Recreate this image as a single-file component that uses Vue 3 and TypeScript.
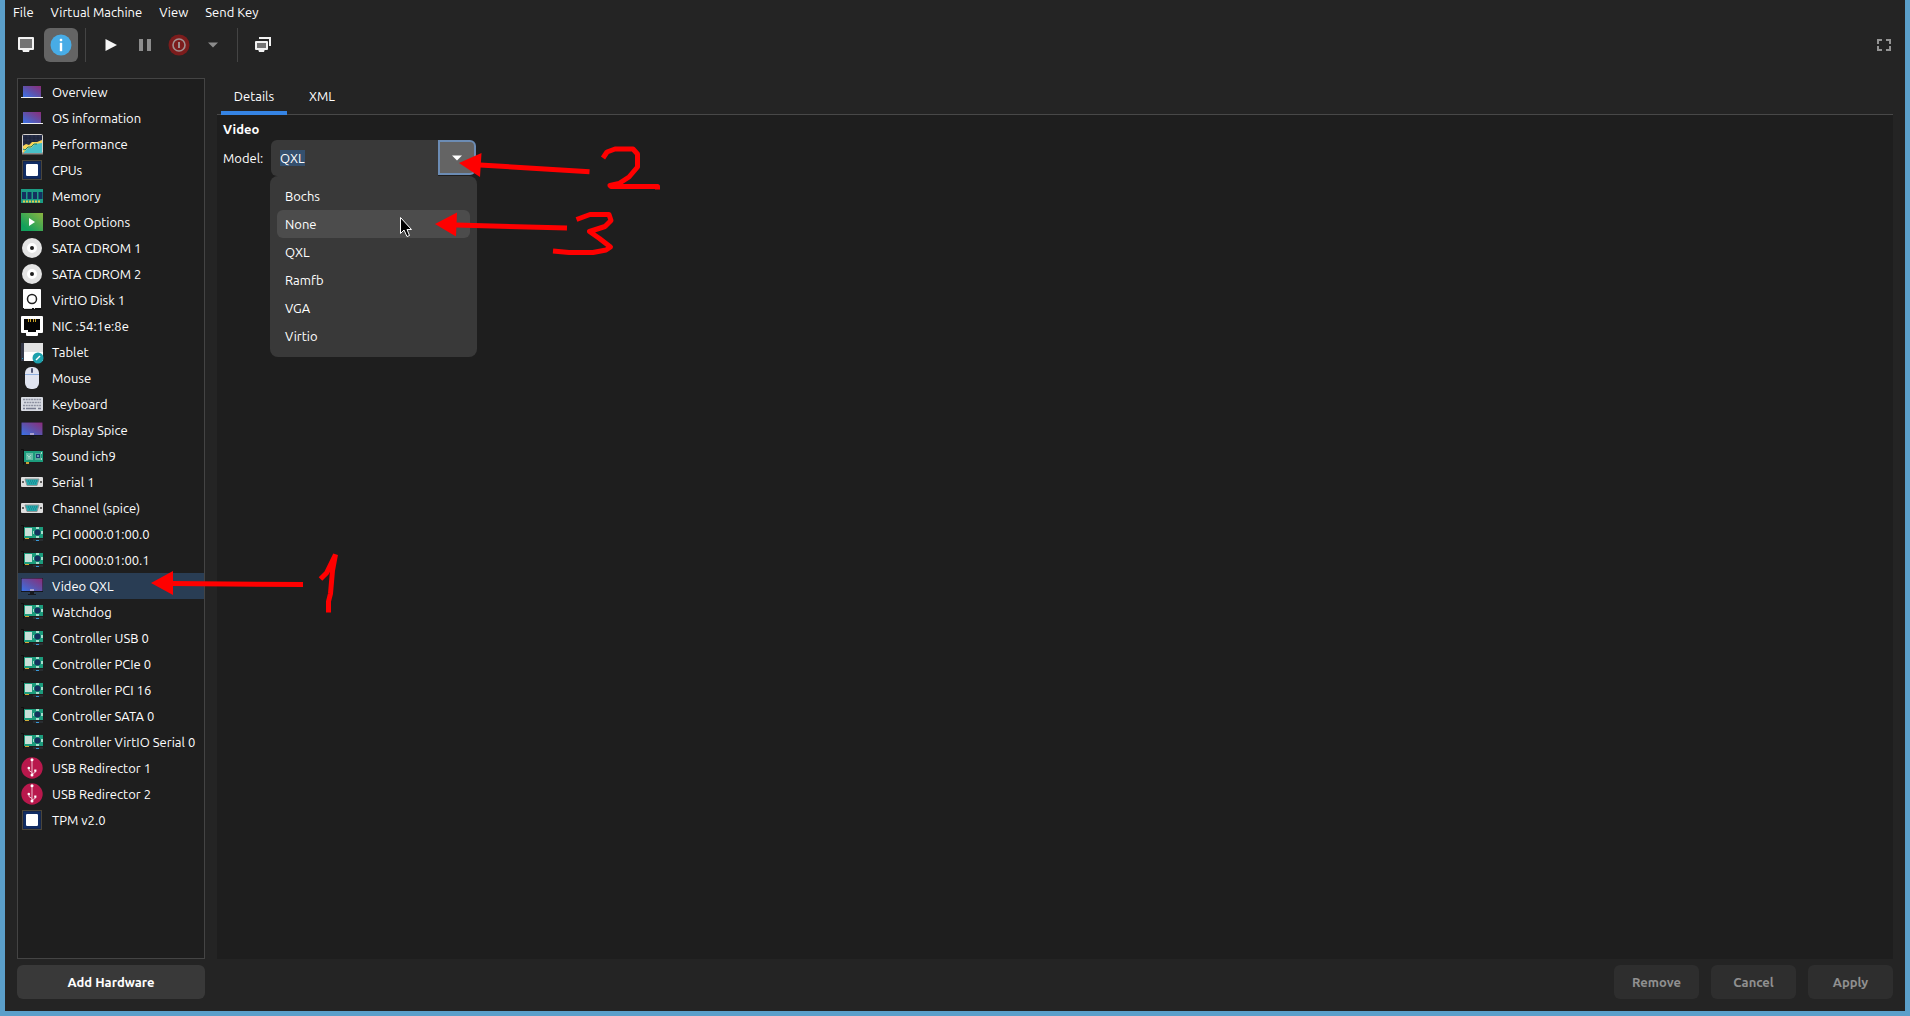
<script setup lang="ts">
import { onMounted, ref } from 'vue'

interface Device {
  name: string
  icon: string
}

const menus = ['File', 'Virtual Machine', 'View', 'Send Key']

const devices: Device[] = [
  { name: 'Overview', icon: 'laptop' },
  { name: 'OS information', icon: 'laptop' },
  { name: 'Performance', icon: 'chart' },
  { name: 'CPUs', icon: 'chip' },
  { name: 'Memory', icon: 'memory' },
  { name: 'Boot Options', icon: 'boot' },
  { name: 'SATA CDROM 1', icon: 'disc' },
  { name: 'SATA CDROM 2', icon: 'disc' },
  { name: 'VirtIO Disk 1', icon: 'disk' },
  { name: 'NIC :54:1e:8e', icon: 'nic' },
  { name: 'Tablet', icon: 'tablet' },
  { name: 'Mouse', icon: 'mouse' },
  { name: 'Keyboard', icon: 'keyboard' },
  { name: 'Display Spice', icon: 'display' },
  { name: 'Sound ich9', icon: 'sound' },
  { name: 'Serial 1', icon: 'serial' },
  { name: 'Channel (spice)', icon: 'serial' },
  { name: 'PCI 0000:01:00.0', icon: 'card' },
  { name: 'PCI 0000:01:00.1', icon: 'card' },
  { name: 'Video QXL', icon: 'display' },
  { name: 'Watchdog', icon: 'card' },
  { name: 'Controller USB 0', icon: 'card' },
  { name: 'Controller PCIe 0', icon: 'card' },
  { name: 'Controller PCI 16', icon: 'card' },
  { name: 'Controller SATA 0', icon: 'card' },
  { name: 'Controller VirtIO Serial 0', icon: 'card' },
  { name: 'USB Redirector 1', icon: 'usb' },
  { name: 'USB Redirector 2', icon: 'usb' },
  { name: 'TPM v2.0', icon: 'chip' },
]

const models = ['Bochs', 'None', 'QXL', 'Ramfb', 'VGA', 'Virtio']

const selected = ref('Video QXL')
const hovered = ref('None')
const model = ref('QXL')
const menuOpen = ref(true)
const tab = ref('Details')
const entry = ref<HTMLInputElement | null>(null)

function choose(name: string) {
  model.value = name
  menuOpen.value = false
}

onMounted(() => {
  entry.value?.focus()
  entry.value?.select()
})
</script>

<template>
  <div class="window">
    <svg class="defs" width="0" height="0" aria-hidden="true">
      <defs>
        <linearGradient id="screen" x1="0" y1="1" x2="1" y2="0">
          <stop offset="0" stop-color="#3a72e8" />
          <stop offset="0.5" stop-color="#6050a8" />
          <stop offset="1" stop-color="#8c2c78" />
        </linearGradient>
        <linearGradient id="green" x1="0" y1="1" x2="1" y2="0">
          <stop offset="0.2" stop-color="#12a05c" />
          <stop offset="1" stop-color="#8cb440" />
        </linearGradient>
      </defs>
    </svg>

    <nav class="menubar">
      <button v-for="m in menus" :key="m" type="button">{{ m }}</button>
    </nav>

    <div class="toolbar">
      <button type="button" class="tool" aria-label="Console">
        <svg width="16" height="16" viewBox="0 0 16 16"><path d="M1 1h14v11H1z" fill="#747474" stroke="#f2f2f2" stroke-width="2" stroke-linejoin="round" /><path d="M4 12h8l-1 3H5z" fill="#f2f2f2" /></svg>
      </button>
      <button type="button" class="tool active" aria-label="Details">
        <svg width="22" height="22" viewBox="0 0 22 22"><circle cx="11" cy="11" r="10.5" fill="#48ace6" /><path d="M10 5h2v2h-2zM10 9h2v8h-2z" fill="#fff" stroke="#fff" stroke-width=".4" /></svg>
      </button>
      <span class="rule"></span>
      <button type="button" class="tool" aria-label="Run">
        <svg width="12" height="14" viewBox="0 0 12 14"><path d="M.5 1v12L12 7z" fill="#f6f6f6" /></svg>
      </button>
      <button type="button" class="tool" aria-label="Pause">
        <svg width="12" height="12" viewBox="0 0 12 12"><path d="M0 0h4v12H0zM8 0h4v12H8z" fill="#8c8c8c" /></svg>
      </button>
      <button type="button" class="tool" aria-label="Shut down">
        <svg width="22" height="22" viewBox="0 0 22 22"><circle cx="11" cy="11" r="10.5" fill="#7c1c1c" /><circle cx="11" cy="11" r="6" fill="none" stroke="#a09090" stroke-width="1.6" /><path d="M10 8h2v6h-2z" fill="#a09090" /></svg>
      </button>
      <button type="button" class="tool" aria-label="Shut down options">
        <svg width="10" height="6" viewBox="0 0 10 6"><path d="M0 .5h10L5 5.5z" fill="#8c8c8c" /></svg>
      </button>
      <span class="rule"></span>
      <button type="button" class="tool" aria-label="Snapshots">
        <svg width="16" height="16" viewBox="0 0 16 16"><path d="M4 1h11v8" fill="none" stroke="#f2f2f2" stroke-width="2" /><path d="M1 5h11v7H1z" fill="#747474" stroke="#f2f2f2" stroke-width="2" stroke-linejoin="round" /><path d="M3 12h7l-1 3H4z" fill="#f2f2f2" /></svg>
      </button>
      <button type="button" class="tool fullscreen" aria-label="Fullscreen">
        <svg width="14" height="12" viewBox="0 0 14 12"><path d="M5 1H1v4M9 1h4v4M5 11H1V7M9 11h4V7" fill="none" stroke="#949494" stroke-width="2" /></svg>
      </button>
    </div>

    <main class="body">
      <aside class="sidebar">
        <ul class="devices">
          <li v-for="d in devices" :key="d.name">
            <button type="button" class="device" :class="{ current: d.name === selected }" @click="selected = d.name">
              <svg class="icon" width="24" height="24" viewBox="0 0 24 24" aria-hidden="true">
                <g v-if="d.icon === 'laptop'">
                  <path d="M3 6h18v11H3z" fill="url(#screen)" /><path d="M1 17h22v1H1z" fill="#eee" />
                </g>
                <g v-else-if="d.icon === 'chart'">
                  <rect x="2.5" y="2.5" width="20" height="19" rx="1" fill="#262e48" stroke="#d4d0cc" />
                  <path d="M6 3v18M10 3v18M14 3v18M18 3v18M3 6h19M3 10h19" stroke="#1c2238" stroke-width="1" />
                  <path d="M3 14l3-2 3 1 3-3h5l5-2v5l-10 4-9 4z" fill="#f8d458" />
                  <path d="M4 20l4-4h3l4-4 7-1v10H4z" fill="#48c0c8" /><path d="M3 17l2 1 3-3h3l3-3 3 0" fill="none" stroke="#148070" />
                  <path d="M2 21h21v1.500H2z" fill="#8c8884" />
                </g>
                <g v-else-if="d.icon === 'chip'">
                  <rect x="2" y="2" width="20" height="20" rx="1" fill="#14264c" />
                  <rect x="2.5" y="2.500" width="19" height="19" fill="none" stroke="#806428" stroke-dasharray="1 1" />
                  <rect x="4" y="4" width="16" height="16" fill="#102c64" /><path d="M6 6h12v12H6z" fill="#fff" />
                  <path d="M6 6h1v1H6zM17 6h1v1h-1zM6 17h1v1H6zM17 17h1v1h-1z" fill="#b0b8c8" />
                </g>
                <g v-else-if="d.icon === 'memory'">
                  <path d="M1 5h22v14H1z" fill="#1c9c84" /><path d="M2 8h4v7H2zM7.500 8h4v7h-4zM13 8h4v7h-4zM18.500 8h4v7h-4z" fill="#143060" />
                  <path d="M3 17.500h18" stroke="#e0cc4c" stroke-width="2" stroke-dasharray="2 1" />
                </g>
                <g v-else-if="d.icon === 'boot'">
                  <path d="M1 3h22v18H1z" fill="url(#green)" /><path d="M9 8v8l6-4z" fill="#fff" />
                </g>
                <g v-else-if="d.icon === 'disc'">
                  <circle cx="12" cy="12" r="10" fill="#e4e4e4" /><circle cx="12" cy="12" r="3.500" fill="#1e1e1e" stroke="#fff" stroke-width="3" />
                </g>
                <g v-else-if="d.icon === 'disk'">
                  <rect x="3" y="1" width="18" height="20" rx="1" fill="#fff" /><circle cx="12" cy="11" r="4.500" fill="none" stroke="#202020" stroke-width="1.500" />
                  <path d="M3 20h18v2H3z" fill="#111" /><path d="M4 20h8v1H4zM14 20h1v1h-1z" fill="#ddd" />
                </g>
                <g v-else-if="d.icon === 'nic'">
                  <path d="M1 3q0-1 1-1h20q1 0 1 1v15q0 1-1 1h-4v2q0 1-1 1H7q-1 0-1-1v-2H2q-1 0-1-1z" fill="#fff" />
                  <path d="M4 5h16v11h-4v2H8v-2H4z" fill="#050505" /><path d="M8.500 5v3M10.500 5v3M13.500 5v3M15.500 5v3" stroke="#c8a028" />
                </g>
                <g v-else-if="d.icon === 'tablet'">
                  <path d="M1 3h22v18H1z" fill="#fff" /><path d="M4 3h19v9H4z" fill="#e2e2e2" /><path d="M1 3h3v18H1z" fill="#343848" /><path d="M2 18h1v1H2z" fill="#20a0c8" />
                  <circle cx="18" cy="18" r="5.500" fill="#1ca0ac" /><path d="M16 20l4-4" stroke="#fff" stroke-width="1.500" />
                </g>
                <g v-else-if="d.icon === 'mouse'">
                  <rect x="5" y="1" width="14" height="22" rx="6" fill="#e0e4f0" /><path d="M5 8.500h14" stroke="#90b0e0" /><rect x="11" y="2" width="2" height="5" rx="1" fill="#505878" />
                </g>
                <g v-else-if="d.icon === 'keyboard'">
                  <rect x="1" y="5" width="22" height="14" rx="1" fill="#d8dbe2" />
                  <path d="M3 7.500h18M4 10.500h17M3 13.500h18" stroke="#8c90a0" stroke-width="1.600" stroke-dasharray="2 .7" /><path d="M3 16.500h2M6 16.500h10M18 16.500h3" stroke="#787d90" stroke-width="1.500" />
                </g>
                <g v-else-if="d.icon === 'display'">
                  <path d="M1 4h22v14H1z" fill="#14161c" /><path d="M1.500 4.500h21v12.500h-21z" fill="url(#screen)" /><path d="M10 15h4v2h-4z" fill="#a8a0d0" /><path d="M10 18h4v2h2v1H8v-1h2z" fill="#16181e" />
                </g>
                <g v-else-if="d.icon === 'serial'">
                  <rect x="1" y="7" width="22" height="10" rx="1" fill="#dedede" /><path d="M5 9h14l-2 6.500H7z" fill="#24a8ac" stroke="#8c9494" />
                  <path d="M8 11h9M9 13h7" stroke="#147880" stroke-dasharray="1 1" /><circle cx="3" cy="12" r="1" fill="#383838" /><circle cx="21" cy="12" r="1" fill="#383838" />
                </g>
                <g v-else-if="d.icon === 'sound'">
                  <path d="M1 5.500h2.500v15" fill="none" stroke="#0e0e0e" /><path d="M4 7h19v11H4z" fill="#1c9c7c" /><path d="M6 9h7v7H6z" fill="#64bca6" /><path d="M7 11l2 2 2-2M8 14h3" fill="none" stroke="#a8dccc" />
                  <path d="M15 9h6v7h-6z" fill="#50ac98" /><path d="M16 10h4v4h-4z" fill="#1c3c70" /><path d="M17 11h2v2h-2z" fill="#7090c0" /><path d="M21 8h1v2h-1zM21 14h1v2h-1z" fill="#a8dcc8" /><path d="M6 18h3v2H6z" fill="#c8a034" />
                </g>
                <g v-else-if="d.icon === 'card'">
                  <path d="M1 3.500h2.500v15" fill="none" stroke="#0e0e0e" /><path d="M4 5h19v11H4z" fill="#1c9c7c" /><path d="M5 6h7v8H5z" fill="#c8e0d8" />
                  <circle cx="17.500" cy="10.500" r="3" fill="#14305c" /><path d="M13 9h1v3h-1zM16 5h3v2h-3zM21 9h2v3h-2zM16 14h3v2h-3z" fill="#a4e0cc" /><path d="M5 16h4v1H5z" fill="#d0ac38" />
                  <path d="M13 18h10" stroke="#343c44" /><path d="M16 18h3v1h-3z" fill="#3898d8" />
                </g>
                <g v-else-if="d.icon === 'usb'">
                  <circle cx="12" cy="12" r="10.700" fill="#b8184c" />
                  <path d="M12 4v14M12 16.500l-3-2v-2.500M12 18l3.300-1.700v-2" fill="none" stroke="#f4d4de" stroke-width=".9" />
                  <circle cx="12" cy="3.800" r="1.500" fill="#fff" /><circle cx="12" cy="19" r="1.500" fill="#fff" /><circle cx="8.800" cy="12" r="1.300" fill="#fff" /><path d="M14.200 13.500h2.200v2.200h-2.200z" fill="#fff" />
                </g>
              </svg>
              <span>{{ d.name }}</span>
            </button>
          </li>
        </ul>
        <button type="button" class="action">Add Hardware</button>
      </aside>

      <section class="panel">
        <div class="tabs" role="tablist">
          <button v-for="t in ['Details', 'XML']" :key="t" type="button" role="tab" class="tab" :aria-selected="t === tab" @click="tab = t">{{ t }}</button>
        </div>
        <div class="page">
          <h2>Video</h2>
          <div class="field">
            <label for="model">Model:</label>
            <div class="combo">
              <input id="model" ref="entry" v-model="model" type="text" autocomplete="off" spellcheck="false" />
              <button type="button" class="toggle" aria-label="Show models" @click="menuOpen = !menuOpen">
                <svg width="10" height="6" viewBox="0 0 10 6"><path d="M0 .5h10L5 5.500z" fill="#fff" /></svg>
              </button>
              <div v-if="menuOpen" class="options" role="listbox" aria-label="Model">
                <button v-for="m in models" :key="m" type="button" role="option" :aria-selected="m === model" :class="{ hover: m === hovered }" @mouseenter="hovered = m" @click="choose(m)">{{ m }}</button>
              </div>
            </div>
          </div>
        </div>
        <div class="actions">
          <button type="button" class="action" disabled>Remove</button>
          <button type="button" class="action" disabled>Cancel</button>
          <button type="button" class="action" disabled>Apply</button>
        </div>
      </section>
    </main>

    <!-- Numbered steps drawn over the window -->
    <svg class="marks" width="680" height="630" viewBox="0 0 680 630" aria-hidden="true">
      <g fill="#f00" stroke="none">
        <path d="M151 583l22-12v24z" /><path d="M459 163l22.500-10-1.500 24z" /><path d="M435 224l22-11.500-1 24z" />
      </g>
      <g fill="none" stroke="#f00" stroke-width="5">
        <path d="M172 583.500l131 1" /><path d="M480 165l109.500 6.700" /><path d="M456 225l111 3" />
        <path d="M320.500 579l6-6 9-18.500-3 16-2 23-2 8v11" />
        <path d="M603 158l4-6 8-3h18l4.500 5v13l-8.500 10-10 6.500-9 2 1 1h46.500v3" stroke-linejoin="round" />
        <path d="M576.500 219.500l13.500-5h19l2 6-6 6-15.500 5 10 7 11 8.500-4.500 3-13 2.500h-24l-16-1.500" stroke-linejoin="round" />
      </g>
      <path d="M400.500 217.500v16l3.500-3.500 3 6.500 2.500-1-2.500-6h4.500z" fill="#000" stroke="#fff" />
    </svg>
  </div>
</template>

<style>
body {
  margin: 0;
  background: #242424;
}
</style>

<style scoped>
.window {
  position: relative;
  box-sizing: border-box;
  min-height: 100vh;
  display: flex;
  flex-direction: column;
  border: 5px solid #5b9fca;
  border-top: 0;
  background: #242424;
  color: #fff;
  font: 13px/16px Ubuntu, "Noto Sans", sans-serif;
}
button,
input {
  box-sizing: border-box;
  margin: 0;
  padding: 0;
  border: 0;
  background: none;
  color: inherit;
  font: inherit;
  outline: none;
}
.defs {
  position: absolute;
}
.menubar {
  display: flex;
  gap: 17px;
  height: 28px;
  padding: 4px 8px 8px;
  box-sizing: border-box;
}
.toolbar {
  display: flex;
  height: 34px;
  padding: 0 4px;
}
.tool {
  width: 34px;
  height: 34px;
  display: flex;
  align-items: center;
  justify-content: center;
}
.tool.active {
  margin-left: 1px;
  border-radius: 6px;
  background: #646464;
}
.rule {
  width: 1px;
  margin: 0 8px 0 7px;
  background: #444;
}
.fullscreen {
  margin-left: auto;
}
.body {
  flex: 1;
  display: flex;
  gap: 12px;
  padding: 16px 12px 12px;
}
.sidebar {
  flex: none;
  width: 188px;
  display: flex;
  flex-direction: column;
  gap: 6px;
}
.devices {
  flex: 1;
  margin: 0;
  padding: 0;
  list-style: none;
  border: 1px solid #444;
  background: #1e1e1e;
}
.device {
  display: flex;
  align-items: center;
  gap: 8px;
  width: 100%;
  height: 26px;
  padding: 0 2px;
  text-align: left;
  white-space: nowrap;
}
.device.current {
  background: #293d54;
}
.icon {
  flex: none;
}
.action {
  height: 34px;
  min-width: 85px;
  border-radius: 6px;
  background: #393939;
  font-weight: 700;
}
.action:disabled {
  background: #2e2e2e;
  color: #909090;
}
.panel {
  flex: 1;
  display: flex;
  flex-direction: column;
}
.tabs {
  display: flex;
  gap: 9px;
  height: 37px;
  padding: 0 4px;
  box-sizing: border-box;
  border-bottom: 1px solid #484848;
}
.tab {
  min-width: 52px;
  height: 37px;
  padding: 0 12px;
  border-top: 2px solid transparent;
  border-bottom: 4px solid transparent;
}
.tab[aria-selected='true'] {
  min-width: 66px;
  border-bottom-color: #3584e4;
}
.page {
  flex: 1;
  padding: 6px;
  background: #1e1e1e;
}
h2 {
  margin: 0;
  font-size: 13px;
  line-height: 16px;
  font-weight: 700;
}
.field {
  display: flex;
  align-items: center;
  gap: 6px;
  margin-top: 3px;
}
.field label {
  width: 42px;
}
.combo {
  position: relative;
  display: flex;
  width: 205px;
  height: 36px;
}
.combo input {
  flex: 1;
  min-width: 0;
  padding: 0 9px;
  border-radius: 6px 0 0 6px;
  background: #393939;
}
.combo input::selection {
  background: #35506e;
  color: #fff;
}
.toggle {
  width: 38px;
  height: 35px;
  border: 2px solid #6c8cb4;
  border-radius: 0 6px 6px 0;
  background: #646464;
}
.toggle svg {
  display: block;
  margin: auto;
}
.options {
  position: absolute;
  top: 36px;
  left: -1px;
  right: -1px;
  display: flex;
  flex-direction: column;
  padding: 6px 7px 7px;
  border-radius: 8px;
  background: #393939;
}
.options button {
  height: 28px;
  padding: 0 8px;
  border-radius: 6px;
  text-align: left;
}
.options button.hover {
  background: #4c4c4c;
}
.actions {
  display: flex;
  justify-content: flex-end;
  gap: 12px;
  padding-top: 6px;
}
.marks {
  position: absolute;
  top: 0;
  left: -5px;
  pointer-events: none;
}
</style>
